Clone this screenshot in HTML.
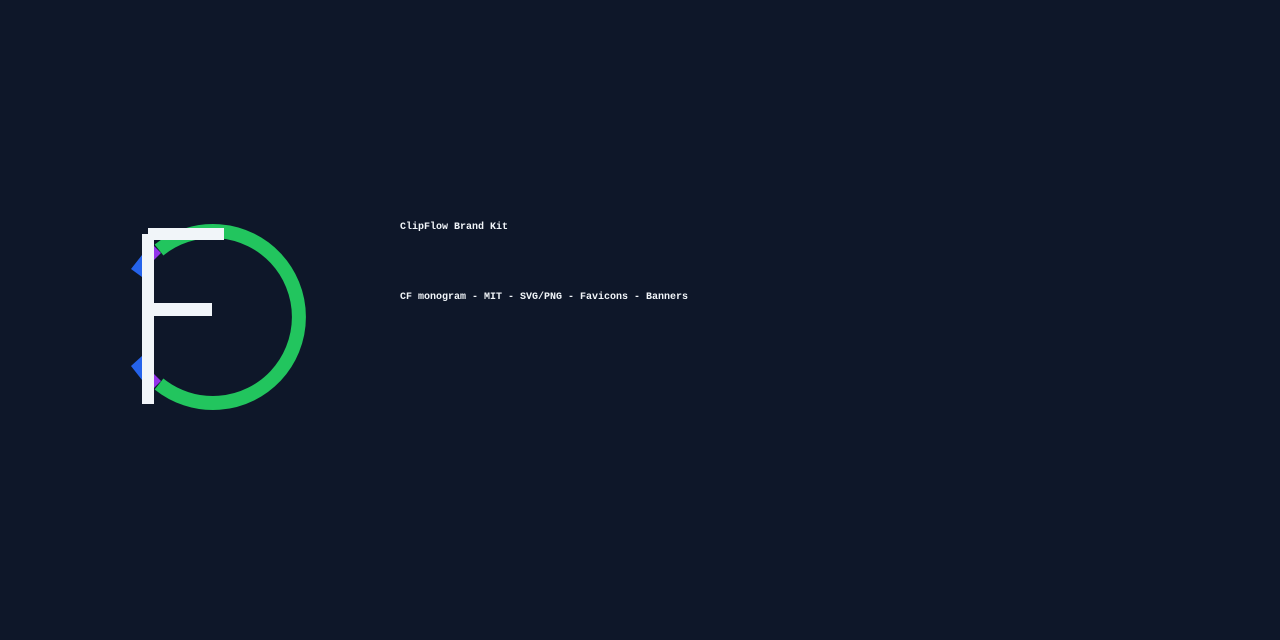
<!DOCTYPE html>
<html><head><style>
html,body{margin:0;padding:0;width:1280px;height:640px;background:#0e1729;overflow:hidden}
.t{position:absolute;left:400px;font-family:"Liberation Mono",monospace;font-weight:bold;font-size:10px;color:#f1f5f9;white-space:pre}
</style></head><body>
<svg width="1280" height="640" style="position:absolute;left:0;top:0">
<path d="M159 250 A86 86 0 1 1 159 384" fill="none" stroke="#22c55e" stroke-width="14"/>
<polygon points="131,269 142,255 142,277" fill="#2563eb"/>
<polygon points="131,366 142,356 142,380" fill="#2563eb"/>
<polygon points="154,246 161,253 154,260" fill="#9333ea"/>
<polygon points="154,374 161,381 154,388" fill="#9333ea"/>
<rect x="142" y="234" width="12" height="170" fill="#f1f5f9"/>
<rect x="148" y="228" width="76" height="12" fill="#f1f5f9"/>
<rect x="154" y="303" width="58" height="13" fill="#f1f5f9"/>
</svg>
<div class="t" style="top:222px">ClipFlow Brand Kit</div>
<div class="t" style="top:292px">CF monogram - MIT - SVG/PNG - Favicons - Banners</div>
</body></html>
